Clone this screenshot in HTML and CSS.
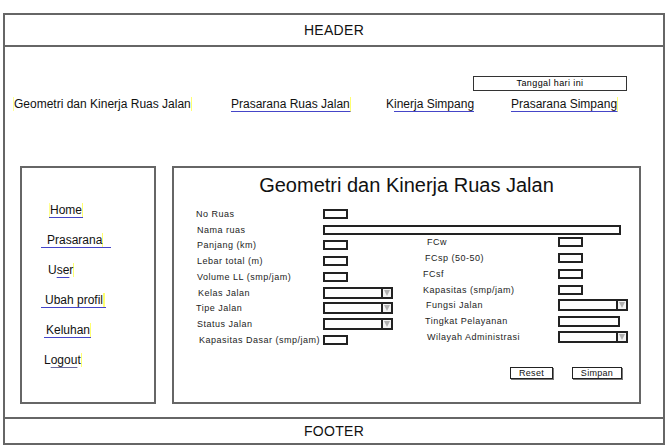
FILE: index.html
```html
<!DOCTYPE html>
<html lang="id">
<head>
<meta charset="utf-8">
<title>Geometri dan Kinerja Ruas Jalan</title>
<link rel="stylesheet" href="styles.css">
</head>
<body>
<div class="page">
  <header class="header">HEADER</header>
  <main class="main">
    <div class="datebar"><div class="date">Tanggal hari ini</div></div>
    <nav class="nav">
      <a class="nlink hl-both">Geometri dan Kinerja Ruas Jalan</a>
      <a class="nlink ul hl-r">Prasarana Ruas Jalan</a>
      <a class="nlink">K<span class="ul">inerja Simpang</span></a>
      <a class="nlink ul hl-r">Prasarana Simpang</a>
    </nav>
    <div class="content">
      <aside class="sidebar">
        <a class="slink s-home ul"><span class="hl-both">Home</span></a>
        <a class="slink s-pras ul"><span class="hl-r">Prasarana</span></a>
        <a class="slink s-user"><span class="hl-r">U<span class="pu">se</span>r</span></a>
        <a class="slink s-ubah ul"><span class="hl-r thick">Ubah profil</span></a>
        <a class="slink s-kel ul"><span class="hl-r">Keluhan</span></a>
        <a class="slink s-log"><span class="hl-r">L<span class="pu grey">ogou</span>t</span></a>
      </aside>
      <section class="panel">
        <h1 class="title">Geometri dan Kinerja Ruas Jalan</h1>
        <div class="form">
          <span class="lbl">No Ruas</span><span class="in sm"></span>
          <span class="lbl i1">Nama ruas</span><span class="in wide"></span>

          <span class="lbl i1">Panjang (km)</span><span class="in sm"></span>
          <span class="lbl r i4">FCw</span><span class="in sm r"></span>

          <span class="lbl i1">Lebar total (m)</span><span class="in sm"></span>
          <span class="lbl r i2">FCsp (50-50)</span><span class="in sm r"></span>

          <span class="lbl i1">Volume LL (smp/jam)</span><span class="in sm"></span>
          <span class="lbl r">FCsf</span><span class="in sm r"></span>

          <span class="lbl i2">Kelas Jalan</span><span class="in sel"><i class="arr"></i></span>
          <span class="lbl r">Kapasitas (smp/jam)</span><span class="in sm r"></span>

          <span class="lbl">Tipe Jalan</span><span class="in sel"><i class="arr"></i></span>
          <span class="lbl r i3">Fungsi Jalan</span><span class="in sel r"><i class="arr"></i></span>

          <span class="lbl i1">Status Jalan</span><span class="in sel"><i class="arr"></i></span>
          <span class="lbl r i2">Tingkat Pelayanan</span><span class="in md r"></span>

          <span class="lbl i3">Kapasitas Dasar (smp/jam)</span><span class="in sm"></span>
          <span class="lbl r i4">Wilayah Administrasi</span><span class="in sel r"><i class="arr"></i></span>
        </div>
        <div class="actions">
          <span class="btn reset">Reset</span>
          <span class="btn simpan">Simpan</span>
        </div>
      </section>
    </div>
  </main>
  <footer class="footer">FOOTER</footer>
</div>
</body>
</html>
```
FILE: styles.css
```css
* { box-sizing: border-box; }

body {
  margin: 0;
  background: #fff;
  font-family: "Liberation Sans", Arial, sans-serif;
  color: #111;
}

.page {
  margin: 13px 0 0 3px;
  width: 662px;
  height: 432px;
  border: 2px solid #666;
  display: flex;
  flex-direction: column;
}

.header,
.footer {
  display: flex;
  align-items: center;
  justify-content: center;
  font-size: 14px;
  letter-spacing: 0.3px;
  color: #111;
}

.header {
  height: 32px;
  border-bottom: 2px solid #666;
}

.footer {
  height: 26px;
  border-top: 2px solid #666;
}

.main {
  flex: 1;
  display: flex;
  flex-direction: column;
}

/* date box */
.datebar {
  display: flex;
  justify-content: flex-end;
  margin-top: 29px;
  padding-right: 36px;
}

.date {
  width: 154px;
  height: 15px;
  border: 1px solid #333;
  font-size: 9px;
  letter-spacing: 0.4px;
  line-height: 13px;
  text-align: center;
  color: #000;
}

/* top navigation */
.nav {
  display: grid;
  grid-template-columns: 218px 155px 125px auto;
  align-items: start;
  margin-top: 6px;
  padding-left: 8px;
  font-size: 12px;
  line-height: 14px;
}

.nlink {
  justify-self: start;
  color: #111;
}

.ul {
  display: inline-block;
  border-bottom: 1px solid #4545c8;
}

.hl-r { border-right: 1px solid #ffff70; }
.hl-both { border-left: 1px solid #ffff90; border-right: 1px solid #ffff70; }
.thick { border-right-width: 2px; }

/* content row */
.content {
  display: flex;
  gap: 16px;
  height: 238px;
  margin: 54px 0 0 15px;
}

.sidebar {
  width: 136px;
  border: 2px solid #666;
  padding-top: 35px;
  display: flex;
  flex-direction: column;
  align-items: flex-start;
  gap: 15px;
  font-size: 12px;
  line-height: 14px;
}

.slink {
  display: block;
  height: 15px;
  color: #111;
}

.slink.ul { display: block; }

.s-home { margin-left: 27px; }
.s-pras { margin-left: 19px; padding: 0 8px 0 6px; }
.s-user { margin-left: 26px; }
.s-ubah { margin-left: 19px; padding: 0 1px 0 4px; }
.s-kel  { margin-left: 22px; padding: 0 0 0 2px; }
.s-log  { margin-left: 22px; }

.pu {
  text-decoration: underline;
  text-decoration-color: #4545c8;
  text-underline-offset: 3px;
}

.pu.grey { text-decoration-color: #6a6aa0; }

/* main panel */
.panel {
  width: 469px;
  border: 2px solid #666;
}

.title {
  margin: 5px 0 0;
  font-size: 20px;
  line-height: 24px;
  font-weight: normal;
  text-align: center;
  color: #111;
}

.form {
  display: grid;
  grid-template-columns: 127px 100px 135px 80px;
  grid-auto-rows: 15.75px;
  align-items: center;
  margin-top: 9px;
  padding-left: 22px;
  font-size: 9px;
  letter-spacing: 0.5px;
  color: #1c1c1c;
}

.lbl { white-space: nowrap; grid-column: 1; }
.in { grid-column: 2; }
.lbl.r { grid-column: 3; }
.in.r { grid-column: 4; }

.i1 { padding-left: 1px; }
.i2 { padding-left: 2px; }
.i3 { padding-left: 3px; }
.i4 { padding-left: 4px; }

.r { margin-bottom: 6px; }

.in {
  display: block;
  height: 10px;
  border: 2px solid #222;
  background: #fff;
}

.sm { width: 25px; }
.md { width: 62px; height: 11px; }
.in.wide { width: 298px; grid-column: 2 / 5; }

.sel {
  width: 70px;
  height: 12px;
  display: flex;
  justify-content: flex-end;
}

.arr {
  width: 10px;
  border-left: 2px solid #222;
  display: flex;
  align-items: center;
  justify-content: center;
  background: #f4f4f4;
}

.arr::before {
  content: "";
  border-left: 3px solid transparent;
  border-right: 3px solid transparent;
  border-top: 6px solid #b0b0b0;
}

.actions {
  display: flex;
  justify-content: flex-end;
  gap: 19px;
  margin-top: 19px;
  padding-right: 17px;
}

.btn {
  height: 12px;
  border: 1px solid #222;
  box-shadow: 1px 1px 0 #777;
  font-size: 9px;
  line-height: 10px;
  letter-spacing: 0.3px;
  text-align: center;
  color: #111;
}

.reset { width: 43px; }
.simpan { width: 50px; }
```
